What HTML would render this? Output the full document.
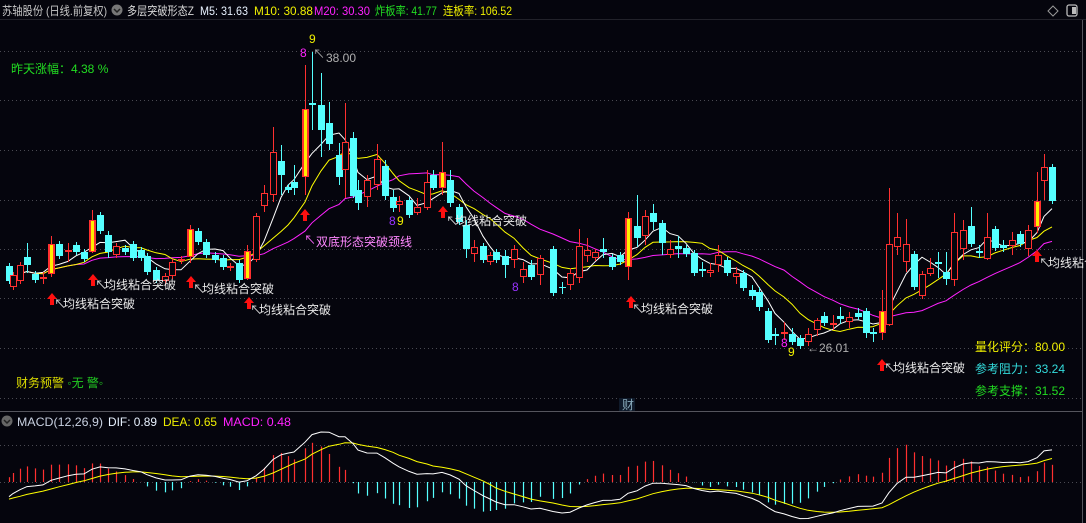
<!DOCTYPE html>
<html><head><meta charset="utf-8"><style>
html,body{margin:0;padding:0;background:#05050d;width:1086px;height:523px;overflow:hidden}
svg{display:block}
text{font-family:"Liberation Sans","Noto Sans CJK SC",sans-serif;font-size:12px}
</style></head><body>
<svg id="s" width="1086" height="523" xmlns="http://www.w3.org/2000/svg">
<rect width="1086" height="523" fill="#05050d"/>
<g id="grid" stroke="#4a4a52" stroke-dasharray="1,3" stroke-width="1"></g>
<line x1="1082.5" y1="20" x2="1082.5" y2="523" stroke="#55555d"/>
<line x1="0" y1="411.5" x2="1082" y2="411.5" stroke="#55555d"/>
<line x1="0" y1="19.5" x2="1086" y2="19.5" stroke="#22222a"/>
<g id="ma" fill="none" stroke-width="1"></g>
<g id="cd"></g>
<g id="mc"></g>
<!-- header -->
<text x="2" y="15" fill="#c8c8c8" font-size="13" textLength="105" lengthAdjust="spacingAndGlyphs">苏轴股份 (日线.前复权)</text>
<circle cx="117" cy="10" r="5.5" fill="#777"/><path d="M114 9 l3 3 l3 -3" stroke="#222" stroke-width="1.5" fill="none"/>
<text x="127" y="15" fill="#d8d8d8" font-size="13" textLength="67" lengthAdjust="spacingAndGlyphs">多层突破形态Z</text>
<text x="200" y="15" fill="#e8f2ff" font-size="13" textLength="48" lengthAdjust="spacingAndGlyphs">M5: 31.63</text>
<text x="254" y="15" fill="#f0f000" font-size="13" textLength="59" lengthAdjust="spacingAndGlyphs">M10: 30.88</text>
<text x="314" y="15" fill="#ff22ff" font-size="13" textLength="56" lengthAdjust="spacingAndGlyphs">M20: 30.30</text>
<text x="375" y="15" fill="#22dd22" font-size="13" textLength="62" lengthAdjust="spacingAndGlyphs">炸板率: 41.77</text>
<text x="443" y="15" fill="#f0f000" font-size="13" textLength="69" lengthAdjust="spacingAndGlyphs">连板率: 106.52</text>
<path d="M1053 6 l5 5 l-5 5 l-5 -5z" stroke="#999" fill="none"/>
<rect x="1067" y="5" width="10" height="11" rx="2" stroke="#bbb" fill="none" stroke-width="1.3"/><rect x="1072" y="7" width="4" height="7" fill="#bbb"/>
<text x="11" y="73" fill="#22dd22">昨天涨幅：4.38 %</text>
<!-- annotations -->
<text x="309" y="43" fill="#f0f000">9</text>
<text x="300" y="57" fill="#ff22ff">8</text>
<text x="313" y="58" fill="#aaa" font-size="11">↖</text>
<text x="326" y="62" fill="#b0b0b0">38.00</text>
<text x="304" y="244" fill="#ff66ff" font-size="11">↖</text>
<text x="316" y="246" fill="#ff88ff">双底形态突破颈线</text>
<text x="389" y="225" fill="#9933ff">8</text><text x="397" y="225" fill="#f0f000">9</text>
<text x="512" y="291" fill="#9933ff">8</text>
<text x="781" y="347" fill="#ff22ff">8</text><text x="788" y="356" fill="#f0f000">9</text>
<text x="807" y="352" fill="#b0b0b0">←26.01</text>
<g id="lab"></g>
<text x="975" y="351" fill="#f0f000">量化评分：80.00</text>
<text x="975" y="373" fill="#33dddd">参考阻力：33.24</text>
<text x="975" y="395" fill="#22dd22">参考支撑：31.52</text>
<text x="16" y="387" fill="#dddd00">财务预警 <tspan fill="#22cc22">◦无 警◦</tspan></text>
<rect x="619" y="398" width="16" height="13" fill="#0f1a2a"/><text x="622" y="409" fill="#8ab" font-size="11">财</text>
<!-- macd header -->
<circle cx="7" cy="421" r="5.5" fill="#666"/><path d="M4 420 l3 3 l3 -3" stroke="#222" stroke-width="1.5" fill="none"/>
<text x="17" y="426" fill="#c8d0e0" font-size="13" textLength="86" lengthAdjust="spacingAndGlyphs">MACD(12,26,9)</text>
<text x="108" y="426" fill="#e8f2ff" font-size="13" textLength="49" lengthAdjust="spacingAndGlyphs">DIF: 0.89</text>
<text x="163" y="426" fill="#f0f000" font-size="13" textLength="54" lengthAdjust="spacingAndGlyphs">DEA: 0.65</text>
<text x="223" y="426" fill="#ff22ff" font-size="13" textLength="68" lengthAdjust="spacingAndGlyphs">MACD: 0.48</text>
</svg>
<script>
const NS="http://www.w3.org/2000/svg";
function el(p,t,a,txt){const e=document.createElementNS(NS,t);for(const k in a)e.setAttribute(k,a[k]);if(txt)e.textContent=txt;p.appendChild(e);return e;}
const g=document.getElementById('grid');
[51,100,150,200,249,298,348,398,445,482].forEach(y=>el(g,'line',{x1:0,y1:y+.5,x2:1082,y2:y+.5}));
const C=[
[9,266,281,'c'],[13,275,287,'r'],[20,265,281,'r'],[27,257,265,'c',243,273],[35,274,280,'c'],[43,277,279,'r',272,284],[51,244,274,'y',236,277],[59,244,256,'c'],[68,250,252,'r',243,262],[76,245,252,'c'],[84,252,259,'c'],[92,220,252,'y',210,253],[100,215,231,'c'],[108,235,252,'c',231,258],[116,246,255,'r'],[125,248,252,'c'],[133,244,258,'c'],[141,250,258,'c'],[147,256,272,'c'],[156,270,280,'c'],[165,276,281,'r'],[172,262,276,'r'],[181,259,261,'r'],[190,229,257,'y',225,263],[198,231,242,'c'],[206,242,255,'c'],[215,255,260,'c'],[223,258,267,'c'],[230,266,268,'r'],[239,263,280,'c'],[247,251,279,'y',245,280],[256,216,260,'r',213,262],[264,193,206,'r',185,212],[273,152,195,'r',127,202],[281,161,175,'c',145,195],[288,187,190,'c'],[294,182,188,'c',165,195],[305,109,177,'y',65,195],[312,103,105,'c',52,130],[321,105,130,'c',73,157],[329,123,144,'c',102,150],[339,155,177,'c',143,185],[345,142,170,'r',103,198],[353,138,196,'c',132,198],[358,190,203,'c',180,210],[367,180,197,'r',175,207],[377,159,185,'r',144,190],[385,166,196,'c',160,200],[393,197,208,'c',190,212],[399,201,205,'r',196,212],[409,200,215,'c'],[417,207,213,'r',198,215],[427,182,208,'r',170,210],[433,175,188,'c',170,190],[442,172,188,'y',142,195],[450,180,203,'c',170,207],[459,207,222,'c'],[466,225,249,'c',220,258],[474,247,254,'r',240,262],[483,246,260,'c'],[490,255,262,'r'],[496,252,260,'c'],[505,256,265,'c',250,278],[514,249,260,'r',245,268],[523,269,277,'r',262,283],[531,265,277,'c',260,280],[540,258,275,'r',255,285],[553,249,293,'c'],[562,287,288,'c',282,294],[570,273,285,'r',268,290],[579,246,278,'r',229,283],[587,250,256,'r',238,262],[595,252,258,'r'],[603,249,252,'c',238,258],[612,257,267,'c'],[620,255,262,'c'],[628,218,267,'y',212,280],[637,226,238,'c',195,247],[645,216,236,'r',210,245],[653,213,222,'c',204,230],[662,223,243,'c',220,255],[670,249,255,'r',240,258],[678,246,249,'c',236,258],[686,248,254,'c'],[694,253,273,'c'],[702,269,271,'c',262,277],[710,270,273,'r',263,277],[718,255,265,'r',245,272],[727,260,273,'c'],[736,273,277,'r',267,284],[743,273,288,'c'],[752,290,296,'c',285,300],[759,292,307,'c',287,311],[768,311,340,'c'],[775,334,336,'c',328,345],[784,332,333,'r',322,340],[792,334,342,'c',328,345],[800,338,346,'c'],[808,334,342,'r',328,346],[817,320,330,'r',318,336],[824,316,323,'c',312,326],[833,323,325,'r',315,330],[840,316,319,'c',307,324],[849,317,322,'r',312,328],[858,313,317,'c',308,320],[866,311,333,'c',308,338],[873,332,334,'c',328,342],[882,311,333,'y',290,340],[889,244,325,'r',188,326],[897,237,247,'r',213,255],[906,244,262,'r',219,272],[914,254,287,'c'],[922,274,296,'r'],[930,268,274,'r',258,276],[938,262,264,'c',252,278],[946,272,279,'c',252,285],[954,232,280,'r',213,286],[963,230,249,'r',220,260],[971,226,244,'c',207,247],[979,251,253,'c',245,258],[987,237,259,'r',213,260],[995,229,248,'c'],[1003,245,248,'c',240,252],[1012,240,246,'r',232,255],[1020,234,244,'c'],[1028,230,249,'r',225,256],[1037,201,227,'y',172,233],[1044,167,181,'r',154,200],[1052,167,201,'c']];
const cd=document.getElementById('cd');
const RED='#ff3030',CY='#55ffff',YE='#ffee00';
const closes=[];
C.forEach(k=>{const[x,t,b,c,wt,wb]=k;const col=c=='c'?CY:RED;
 el(cd,'line',{x1:x+.5,y1:wt||t-3,x2:x+.5,y2:wb||b+3,stroke:col});
 const h=Math.max(b-t,1);
 if(c=='c')el(cd,'rect',{x:x-3,y:t,width:7,height:h,fill:CY});
 else if(c=='r')el(cd,'rect',{x:x-2.5,y:t+.5,width:6,height:Math.max(h-1,1),fill:'#05050d',stroke:RED});
 else{el(cd,'rect',{x:x-3,y:t,width:7,height:h,fill:RED});el(cd,'rect',{x:x-1,y:t+1,width:3,height:h-2,fill:YE});}
 closes.push(c=='c'?b:t);
});
const ma=document.getElementById('ma');
function mav(n,col){let pts=[];for(let i=0;i<C.length;i++){let s=0,m=0;for(let j=Math.max(0,i-n+1);j<=i;j++){s+=closes[j];m++;}pts.push(C[i][0]+','+(s/m).toFixed(1));}
 el(ma,'polyline',{points:pts.join(' '),stroke:col});}
mav(20,'#ff22ff');mav(10,'#ffff00');mav(5,'#ffffff');
const lab=document.getElementById('lab');
function arr(x,y){el(lab,'path',{d:`M${x} ${y} l-5 6 h3 v6 h4 v-6 h3z`,fill:'#ff1010'});}
[[52,293,63,308],[93,274,104,289],[191,276,202,293],[249,297,259,314],[305,209,0,0],[443,206,455,225],[631,296,641,313],[882,359,893,372],[1037,250,1048,267]].forEach(a=>{arr(a[0],a[1]);if(a[2]){el(lab,'text',{x:a[2]-9,y:a[3],fill:'#ddd','font-size':'11'},'↖');el(lab,'text',{x:a[2],y:a[3],fill:'#e8e8e8'},'均线粘合突破');}});
const mc=document.getElementById('mc');
const P=closes.map(y=>38-(y-55)/24.4);
let e12=P[0]-0.6,e26=P[0]-0.1,dea=-0.5;const D=[],E=[];
P.forEach(p=>{e12=e12+(p-e12)*2/13;e26=e26+(p-e26)*2/27;const d=e12-e26;dea=dea+(d-dea)*2/10;D.push(d);E.push(dea);});
const mx=Math.max(...D.map(Math.abs),...E.map(Math.abs));const k=50/mx,z=482;
C.forEach((c,i)=>{const h=2*(D[i]-E[i])*k;el(mc,'line',{x1:c[0]+.5,y1:z,x2:c[0]+.5,y2:z-h,stroke:h>0?RED:CY,'stroke-width':1.2});});
el(mc,'polyline',{points:C.map((c,i)=>c[0]+','+(z-E[i]*k).toFixed(1)).join(' '),stroke:'#ffff00',fill:'none'});
el(mc,'polyline',{points:C.map((c,i)=>c[0]+','+(z-D[i]*k).toFixed(1)).join(' '),stroke:'#ffffff',fill:'none'});
</script>
</body></html>
